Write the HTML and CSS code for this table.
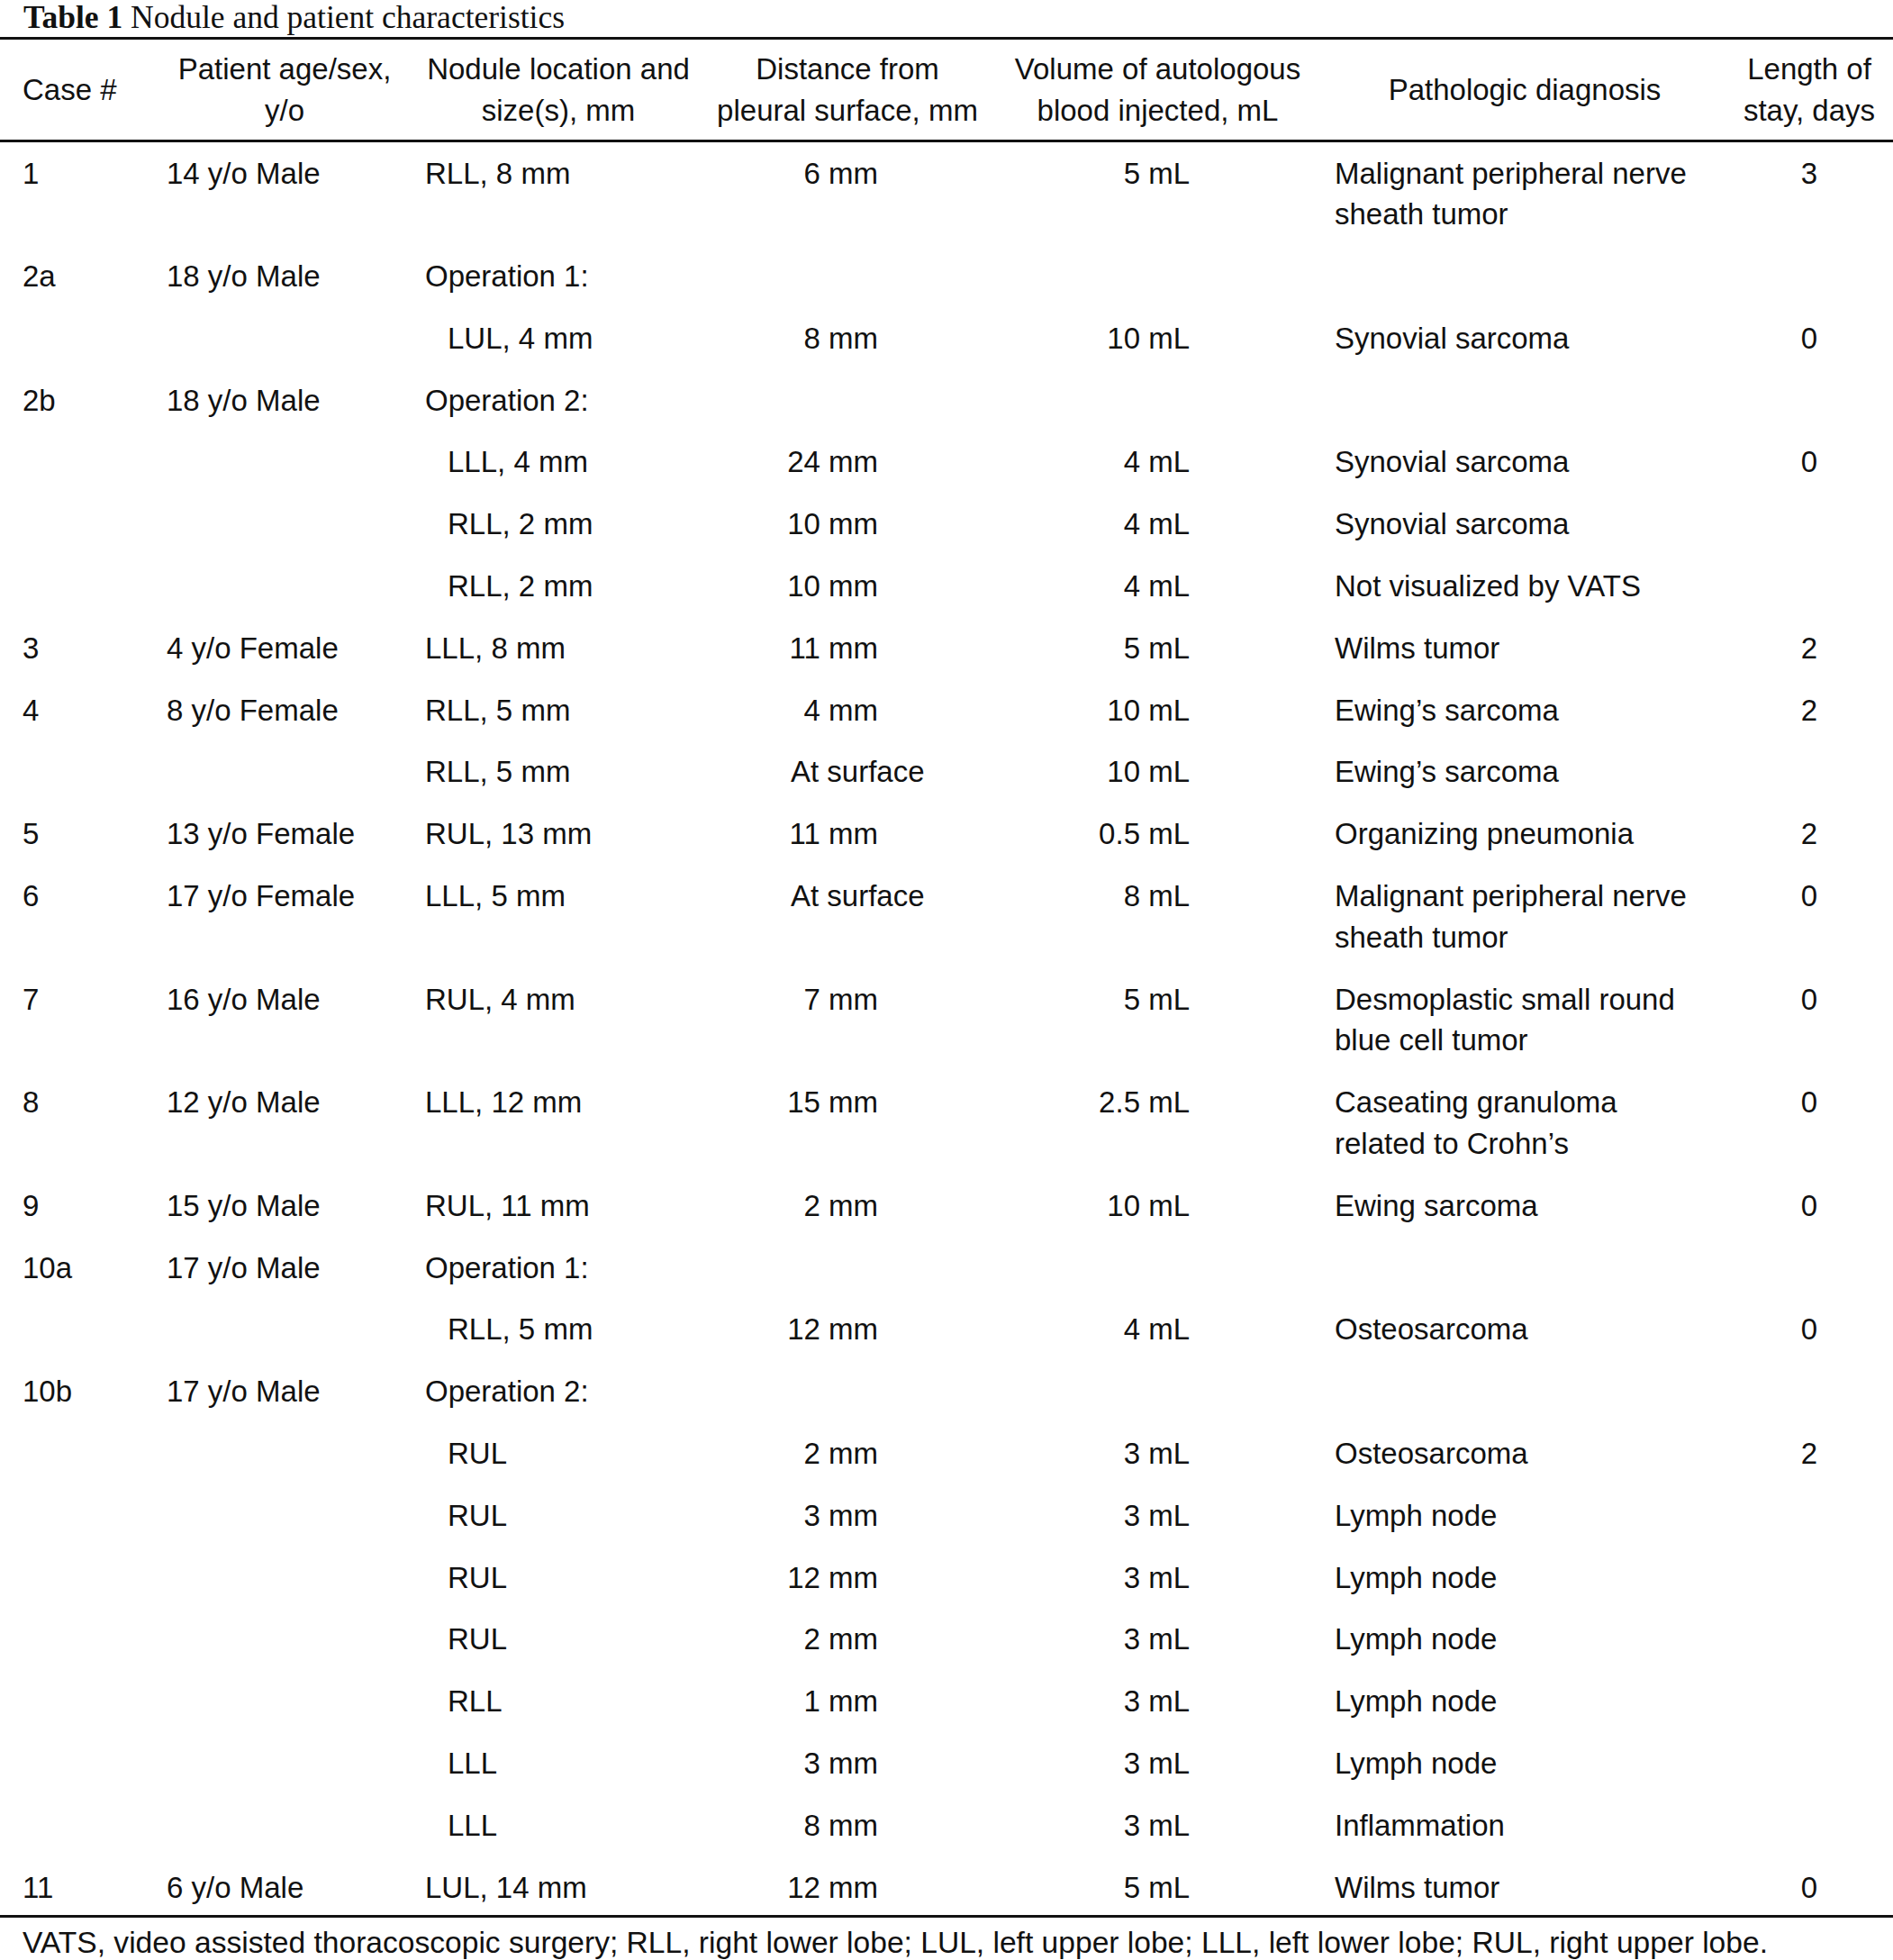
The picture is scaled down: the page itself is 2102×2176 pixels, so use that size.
FILE: index.html
```html
<!DOCTYPE html>
<html lang="en">
<head>
<meta charset="utf-8">
<title>Table 1 Nodule and patient characteristics</title>
<link rel="stylesheet" href="styles.css">
</head>
<body>
<div class="page">
  <h1 class="title"><b>Table 1</b> Nodule and patient characteristics</h1>
  <table class="tbl">
    <colgroup>
      <col class="w1"><col class="w2"><col class="w3"><col class="w4"><col class="w5"><col class="w6"><col class="w7">
    </colgroup>
    <thead>
      <tr>
        <th class="h-case">Case #</th>
        <th>Patient age/sex,<br>y/o</th>
        <th>Nodule location and<br>size(s), mm</th>
        <th>Distance from<br>pleural surface, mm</th>
        <th>Volume of autologous<br>blood injected, mL</th>
        <th>Pathologic diagnosis</th>
        <th class="h-los">Length of<br>stay, days</th>
      </tr>
    </thead>
    <tbody>
      <tr><td class="c-case">1</td><td class="c-pat">14 y/o Male</td><td class="c-loc">RLL, 8 mm</td><td class="c-dist">6 mm</td><td class="c-vol">5 mL</td><td class="c-dx">Malignant peripheral nerve<br>sheath tumor</td><td class="c-los">3</td></tr>
      <tr><td class="c-case">2a</td><td class="c-pat">18 y/o Male</td><td class="c-loc">Operation 1:</td><td class="c-dist"></td><td class="c-vol"></td><td class="c-dx"></td><td class="c-los"></td></tr>
      <tr><td class="c-case"></td><td class="c-pat"></td><td class="c-loc ind">LUL, 4 mm</td><td class="c-dist">8 mm</td><td class="c-vol">10 mL</td><td class="c-dx">Synovial sarcoma</td><td class="c-los">0</td></tr>
      <tr><td class="c-case">2b</td><td class="c-pat">18 y/o Male</td><td class="c-loc">Operation 2:</td><td class="c-dist"></td><td class="c-vol"></td><td class="c-dx"></td><td class="c-los"></td></tr>
      <tr><td class="c-case"></td><td class="c-pat"></td><td class="c-loc ind">LLL, 4 mm</td><td class="c-dist">24 mm</td><td class="c-vol">4 mL</td><td class="c-dx">Synovial sarcoma</td><td class="c-los">0</td></tr>
      <tr><td class="c-case"></td><td class="c-pat"></td><td class="c-loc ind">RLL, 2 mm</td><td class="c-dist">10 mm</td><td class="c-vol">4 mL</td><td class="c-dx">Synovial sarcoma</td><td class="c-los"></td></tr>
      <tr><td class="c-case"></td><td class="c-pat"></td><td class="c-loc ind">RLL, 2 mm</td><td class="c-dist">10 mm</td><td class="c-vol">4 mL</td><td class="c-dx">Not visualized by VATS</td><td class="c-los"></td></tr>
      <tr><td class="c-case">3</td><td class="c-pat">4 y/o Female</td><td class="c-loc">LLL, 8 mm</td><td class="c-dist">11 mm</td><td class="c-vol">5 mL</td><td class="c-dx">Wilms tumor</td><td class="c-los">2</td></tr>
      <tr><td class="c-case">4</td><td class="c-pat">8 y/o Female</td><td class="c-loc">RLL, 5 mm</td><td class="c-dist">4 mm</td><td class="c-vol">10 mL</td><td class="c-dx">Ewing’s sarcoma</td><td class="c-los">2</td></tr>
      <tr><td class="c-case"></td><td class="c-pat"></td><td class="c-loc">RLL, 5 mm</td><td class="c-dist surf">At surface</td><td class="c-vol">10 mL</td><td class="c-dx">Ewing’s sarcoma</td><td class="c-los"></td></tr>
      <tr><td class="c-case">5</td><td class="c-pat">13 y/o Female</td><td class="c-loc">RUL, 13 mm</td><td class="c-dist">11 mm</td><td class="c-vol">0.5 mL</td><td class="c-dx">Organizing pneumonia</td><td class="c-los">2</td></tr>
      <tr><td class="c-case">6</td><td class="c-pat">17 y/o Female</td><td class="c-loc">LLL, 5 mm</td><td class="c-dist surf">At surface</td><td class="c-vol">8 mL</td><td class="c-dx">Malignant peripheral nerve<br>sheath tumor</td><td class="c-los">0</td></tr>
      <tr><td class="c-case">7</td><td class="c-pat">16 y/o Male</td><td class="c-loc">RUL, 4 mm</td><td class="c-dist">7 mm</td><td class="c-vol">5 mL</td><td class="c-dx">Desmoplastic small round<br>blue cell tumor</td><td class="c-los">0</td></tr>
      <tr><td class="c-case">8</td><td class="c-pat">12 y/o Male</td><td class="c-loc">LLL, 12 mm</td><td class="c-dist">15 mm</td><td class="c-vol">2.5 mL</td><td class="c-dx">Caseating granuloma<br>related to Crohn’s</td><td class="c-los">0</td></tr>
      <tr><td class="c-case">9</td><td class="c-pat">15 y/o Male</td><td class="c-loc">RUL, 11 mm</td><td class="c-dist">2 mm</td><td class="c-vol">10 mL</td><td class="c-dx">Ewing sarcoma</td><td class="c-los">0</td></tr>
      <tr><td class="c-case">10a</td><td class="c-pat">17 y/o Male</td><td class="c-loc">Operation 1:</td><td class="c-dist"></td><td class="c-vol"></td><td class="c-dx"></td><td class="c-los"></td></tr>
      <tr><td class="c-case"></td><td class="c-pat"></td><td class="c-loc ind">RLL, 5 mm</td><td class="c-dist">12 mm</td><td class="c-vol">4 mL</td><td class="c-dx">Osteosarcoma</td><td class="c-los">0</td></tr>
      <tr><td class="c-case">10b</td><td class="c-pat">17 y/o Male</td><td class="c-loc">Operation 2:</td><td class="c-dist"></td><td class="c-vol"></td><td class="c-dx"></td><td class="c-los"></td></tr>
      <tr><td class="c-case"></td><td class="c-pat"></td><td class="c-loc ind">RUL</td><td class="c-dist">2 mm</td><td class="c-vol">3 mL</td><td class="c-dx">Osteosarcoma</td><td class="c-los">2</td></tr>
      <tr><td class="c-case"></td><td class="c-pat"></td><td class="c-loc ind">RUL</td><td class="c-dist">3 mm</td><td class="c-vol">3 mL</td><td class="c-dx">Lymph node</td><td class="c-los"></td></tr>
      <tr><td class="c-case"></td><td class="c-pat"></td><td class="c-loc ind">RUL</td><td class="c-dist">12 mm</td><td class="c-vol">3 mL</td><td class="c-dx">Lymph node</td><td class="c-los"></td></tr>
      <tr><td class="c-case"></td><td class="c-pat"></td><td class="c-loc ind">RUL</td><td class="c-dist">2 mm</td><td class="c-vol">3 mL</td><td class="c-dx">Lymph node</td><td class="c-los"></td></tr>
      <tr><td class="c-case"></td><td class="c-pat"></td><td class="c-loc ind">RLL</td><td class="c-dist">1 mm</td><td class="c-vol">3 mL</td><td class="c-dx">Lymph node</td><td class="c-los"></td></tr>
      <tr><td class="c-case"></td><td class="c-pat"></td><td class="c-loc ind">LLL</td><td class="c-dist">3 mm</td><td class="c-vol">3 mL</td><td class="c-dx">Lymph node</td><td class="c-los"></td></tr>
      <tr><td class="c-case"></td><td class="c-pat"></td><td class="c-loc ind">LLL</td><td class="c-dist">8 mm</td><td class="c-vol">3 mL</td><td class="c-dx">Inflammation</td><td class="c-los"></td></tr>
      <tr><td class="c-case">11</td><td class="c-pat">6 y/o Male</td><td class="c-loc">LUL, 14 mm</td><td class="c-dist">12 mm</td><td class="c-vol">5 mL</td><td class="c-dx">Wilms tumor</td><td class="c-los">0</td></tr>
    </tbody>
  </table>
  <p class="note">VATS, video assisted thoracoscopic surgery; RLL, right lower lobe; LUL, left upper lobe; LLL, left lower lobe; RUL, right upper lobe.</p>
</div>
</body>
</html>
```

FILE: styles.css
```css
html, body {
  margin: 0;
  padding: 0;
  background: #ffffff;
}

.page {
  width: 2102px;
  color: #111111;
  font-family: "Liberation Sans", Arial, Helvetica, sans-serif;
  font-size: 33px;
}

.title {
  margin: 0 0 2px 0;
  padding-left: 26px;
  font-family: "Liberation Serif", "Times New Roman", serif;
  font-size: 35.5px;
  font-weight: normal;
  line-height: 39px;
  white-space: nowrap;
}

.title b {
  font-weight: bold;
}

.tbl {
  width: 2102px;
  table-layout: fixed;
  border-collapse: collapse;
  border-spacing: 0;
  border-top: 3px solid #111111;
  border-bottom: 3px solid #111111;
}

.w1 { width: 160px; }
.w2 { width: 312px; }
.w3 { width: 296px; }
.w4 { width: 346px; }
.w5 { width: 343px; }
.w6 { width: 472px; }
.w7 { width: 173px; }

.tbl thead tr {
  border-bottom: 3px solid #111111;
}

.tbl th {
  font-weight: normal;
  text-align: center;
  vertical-align: middle;
  line-height: 46px;
  padding: 10px 0 9px 0;
  white-space: nowrap;
}

.tbl th.h-case {
  text-align: left;
  padding-left: 25px;
}

.tbl th.h-los {
  padding-right: 13px;
}

.tbl td {
  vertical-align: top;
  line-height: 45.8px;
  padding: 11.5px 0;
  white-space: nowrap;
  text-align: left;
}

.tbl tbody tr:last-child td {
  padding-bottom: 8px;
}

.tbl td.c-case { padding-left: 25px; }
.tbl td.c-pat { padding-left: 25px; }
.tbl td.c-loc { padding-left: 0; }
.tbl td.c-loc.ind { padding-left: 25px; }
.tbl td.c-dist { text-align: right; padding-right: 139px; }
.tbl td.c-dist.surf { text-align: left; padding-left: 110px; padding-right: 0; }
.tbl td.c-vol { text-align: right; padding-right: 136px; }
.tbl td.c-dx { padding-left: 25px; }
.tbl td.c-los { text-align: center; padding-right: 13px; }

.note {
  margin: 5px 0 0 0;
  padding-left: 25px;
  font-size: 33.6px;
  line-height: 46px;
  white-space: nowrap;
}
```
